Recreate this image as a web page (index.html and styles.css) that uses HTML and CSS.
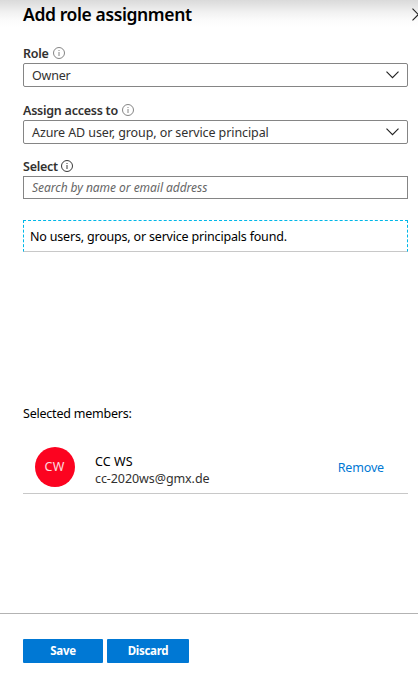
FILE: index.html
```html
<!DOCTYPE html>
<html lang="en">
<head>
<meta charset="utf-8">
<title>Add role assignment</title>
<link rel="stylesheet" href="styles.css">
</head>
<body>
<main class="panel">
  <header class="header">
    <h1 class="title">Add role assignment</h1>
    <svg class="close" width="13" height="13" viewBox="0 0 13 13"><path d="M.5.7 12.2 12.4M12.2.7.5 12.4"/></svg>
  </header>
  <form class="form">
    <div class="label"><span class="role-label">Role</span><svg class="info" viewBox="0 0 12 12"><circle cx="6" cy="6" r="5.5"/><path d="M6 5v4M6 3v1"/></svg></div>
    <div class="box select"><span class="owner">Owner</span><svg class="chevron" viewBox="0 0 13 8"><path d="m.5.7 6 6 6-6"/></svg></div>
    <div class="label second"><span class="assign-label">Assign access to</span><svg class="info" viewBox="0 0 12 12"><circle cx="6" cy="6" r="5.5"/><path d="M6 5v4M6 3v1"/></svg></div>
    <div class="box select"><span class="principal">Azure AD user, group, or service principal</span><svg class="chevron" viewBox="0 0 13 8"><path d="m.5.7 6 6 6-6"/></svg></div>
    <div class="label third"><span class="select-label">Select</span><svg class="info dark" viewBox="0 0 12 12"><circle cx="6" cy="6" r="5.5"/><path d="M6 5v4M6 3v1"/></svg></div>
    <div class="box search"><span class="placeholder">Search by name or email address</span></div>
  </form>
  <div class="empty"><span class="empty-text">No users, groups, or service principals found.</span></div>
  <section class="members">
    <div class="members-title"><span class="members-text">Selected members:</span></div>
    <div class="member">
      <div class="avatar"><span class="initials">CW</span></div>
      <div class="identity">
        <div><span class="name">CC WS</span></div>
        <div><span class="email">cc-2020ws@gmx.de</span></div>
      </div>
      <a class="remove">Remove</a>
    </div>
  </section>
  <footer class="footer">
    <div class="button save"><span class="save-text">Save</span></div>
    <div class="button discard"><span class="discard-text">Discard</span></div>
  </footer>
</main>
</body>
</html>
```
FILE: styles.css
```css
* { box-sizing: border-box; }
body {
  margin: 0;
  overflow: hidden;
  background: #fff;
  color: #000;
  font: 12.5px/17px "Noto Sans", sans-serif;
  white-space: nowrap;
}
.panel {
  display: flex;
  flex-direction: column;
  height: 673px;
  background: linear-gradient(#dadada, #e3e3e3 5px, #f1f1f1 12px, #fbfbfb 20px, #fff 27px) top / 100% 27px no-repeat;
}
.header {
  display: flex;
  justify-content: space-between;
  height: 44px;
  padding: 2px 0 0 23px;
}
.title { margin: 0; font-size: 17.5px; line-height: 24px; font-weight: 600; letter-spacing: -.38px; }
.close { flex: none; margin: 6px -7px 0 0; fill: none; stroke: #222; stroke-width: 1.1; }
.form { padding: 0 10px 0 23px; color: #323130; }
.label { display: flex; align-items: center; gap: 4px; height: 19px; padding-bottom: 1px; font-weight: 600; font-size: 12.5px; letter-spacing: -.25px; }
.second { margin-top: 14px; }
.third { margin-top: 13px; gap: 3px; }
.info { width: 12px; height: 12px; fill: none; stroke: #777; stroke-width: .9; }
.dark { stroke: #222; }
.box { display: flex; align-items: center; height: 24px; border: 1px solid #858585; border-radius: 2px; padding: 0 8px; background: #fff; }
.select { justify-content: space-between; }
.owner { letter-spacing: -.2px; }
.principal { letter-spacing: -.1px; }
.chevron { width: 13px; height: 8px; fill: none; stroke: #222; stroke-width: 1.15; }
.search { height: 23px; border-radius: 0; }
.placeholder { font-size: 12px; font-style: italic; letter-spacing: -.04px; color: #666; }
.empty {
  height: 32px;
  margin: 21px 10px 0 23px;
  padding: 7px 6px 0;
  border: 1px dashed #00b7e8;
  border-bottom: 1px solid #c8c8c8;
}
.empty-text { letter-spacing: -.19px; }
.members { margin: 153px 10px 0 23px; }
.members-title { height: 18px; line-height: 18px; letter-spacing: -.22px; }
.member { display: flex; align-items: center; height: 71px; padding: 17px 24px 0 12px; border-bottom: 1px solid #c8c8c8; }
.avatar { width: 40px; height: 40px; border-radius: 50%; background: #fc0320; color: #fff; display: flex; align-items: center; justify-content: center; }
.initials { opacity: .85; padding-right: 1px; letter-spacing: .2px; }
.identity { margin-left: 20px; flex: 1; padding-top: 6px; }
.name { letter-spacing: .1px; }
.email { color: #323130; letter-spacing: -.08px; }
.remove { color: #0078d4; padding-top: 2px; letter-spacing: -.15px; }
.footer { display: flex; gap: 4px; height: 60px; margin-top: auto; padding: 25px 23px 0; border-top: 1px solid #b3b3b3; }
.button { display: flex; align-items: center; justify-content: center; height: 24px; padding-bottom: 1px; border-radius: 1px; background: #0078d4; color: #fff; font-weight: 700; font-size: 11.5px; letter-spacing: -.3px; }
.save { width: 80px; }
.discard { width: 82px; }
```
